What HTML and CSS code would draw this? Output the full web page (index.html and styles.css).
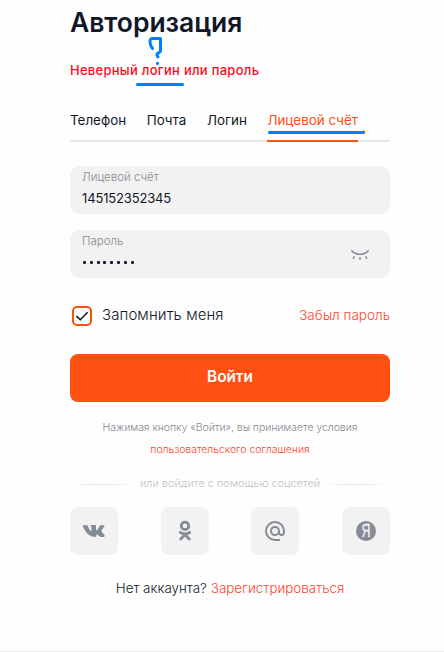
FILE: index.html
```html
<!DOCTYPE html>
<html lang="ru">
<head>
<meta charset="utf-8">
<title>Авторизация</title>
<link rel="stylesheet" href="styles.css">
</head>
<body>
<main class="login">
  <h1 class="title"><span>Авторизация</span></h1>
  <p class="error">Неверный логин или пароль</p>
  <nav class="tabs">
    <a class="tab">Телефон</a>
    <a class="tab">Почта</a>
    <a class="tab">Логин</a>
    <a class="tab tab-active">Лицевой счёт</a>
  </nav>
  <div class="field">
    <div class="field-body">
      <span class="label">Лицевой счёт</span>
      <span class="value">145152352345</span>
    </div>
  </div>
  <div class="field">
    <div class="field-body">
      <span class="label">Пароль</span>
      <span class="dots"><i></i><i></i><i></i><i></i><i></i><i></i><i></i><i></i></span>
    </div>
    <svg class="eye" viewBox="0 0 20 14" fill="none" stroke="#858993" stroke-width="1.5">
      <path d="M1.400 2.200C5.600 7.700 14.400 7.700 18.600 2.200M4.500 8.300 3 10.800M10 9v3M15.500 8.300l1.500 2.500"/>
    </svg>
  </div>
  <div class="options">
    <span class="checkbox"><svg viewBox="0 0 16 16" fill="none" stroke="#101828" stroke-width="1.6"><path d="M2.4 8.2 6.3 11.7 13.6 4.3"/></svg></span>
    <span class="remember">Запомнить меня</span>
    <a class="forgot">Забыл пароль</a>
  </div>
  <button class="submit">Войти</button>
  <p class="terms"><span>Нажимая кнопку «Войти», вы принимаете условия</span><a class="terms-link">пользовательского соглашения</a></p>
  <div class="divider"><span>или войдите с помощью соцсетей</span></div>
  <div class="socials">
    <a class="social"><svg viewBox="0 0 24 24" fill="#858b95"><path d="M1.1 6.2h3.8c.5 0 .7.2.9.8 1 3 2.6 5 3.2 5 .3 0 .4-.2.4-.9V8.3C9.3 7 8.6 6.9 8.6 6.4c0-.2.2-.4.5-.4h4.2c.5 0 .7.3.7.8v4c0 .5.2.7.4.7.5 0 2.2-2.2 3.1-4.3.3-.7.6-1 1.200-1h3.100c.7 0 .9.4.7.9-.4 1.400-3.300 4.500-3.300 4.900 0 .5 3.600 3.700 3.600 5.100 0 .5-.4.8-1 .8h-3c-1.200 0-2.700-2.500-3.900-2.500-.5 0-.6.3-.6.800v.8c0 .7-.3.900-1.300.900-7 .1-10.500-6.400-12.200-10.800-.1-.4 0-.7.3-.7Z"/></svg></a>
    <a class="social"><svg viewBox="0 0 24 24" fill="none" stroke="#858b95" stroke-width="2.800" stroke-linecap="round"><circle cx="12" cy="6.900" r="3.700"/><path d="M7.300 13.500c2.800 1.700 6.600 1.700 9.400 0M12 15.500l-4.300 4.600M12 15.500l4.300 4.600"/></svg></a>
    <a class="social"><svg viewBox="0 0 24 24" fill="#858b95"><path d="M12 2a10 10 0 0 0 0 20h5v-2h-5c-4.300 0-8-3.700-8-8s3.700-8 8-8 8 3.700 8 8v1.400c0 .8-.7 1.600-1.500 1.600s-1.500-.8-1.500-1.600V12a5 5 0 1 0-1.500 3.500c.7.9 1.800 1.500 3 1.500 2 0 3.500-1.600 3.500-3.600V12A10 10 0 0 0 12 2Zm0 13a3 3 0 1 1 0-6 3 3 0 0 1 0 6Z"/></svg></a>
    <a class="social"><svg viewBox="0 0 24 24"><circle cx="12" cy="12" r="10" fill="#858b95"/><text class="ya" x="12" y="18" text-anchor="middle" textLength="9" lengthAdjust="spacingAndGlyphs">Я</text></svg></a>
  </div>
  <p class="signup"><span class="ask">Нет аккаунта?</span> <a class="register">Зарегистрироваться</a></p>
</main>
<div class="bottom-line"></div>
<svg class="marks" viewBox="0 0 444 652" fill="none" stroke="#0080ff" stroke-width="3" stroke-linecap="round" stroke-linejoin="round">
  <path d="M152.500 48.500C149.500 45 149 38.500 152 38.500h8.500v12.500c0 2-3.500 1.500-3.500 3.500 0 1.500.5 1.500 1 2.500M157.500 63.300v.1M137.500 84.500h45"/>
  <path d="M269.500 132.500H363.500v-.5"/>
</svg>
</body>
</html>
```
FILE: styles.css
```css
* { box-sizing: border-box; }
body { margin: 0; height: 652px; overflow: hidden; position: relative; background: #fefefe; color: #101828; font-family: Inter, "Noto Sans", sans-serif; display: flex; flex-direction: column; }
p, h1 { margin: 0; white-space: nowrap; }
.login { width: 320px; margin-left: 70px; flex: 1; display: flex; flex-direction: column; }
.title { height: 46px; line-height: 45px; font-size: 26.5px; font-weight: 600; letter-spacing: -0.05px; }
.error { margin-top: 13px; line-height: 22px; font-size: 13px; font-weight: 500; letter-spacing: 0.27px; color: #ff0a1c; }
.tabs { margin-top: 27px; height: 34px; display: flex; gap: 20.600px; border-bottom: 2px solid #e6e6e6; font-size: 13.4px; line-height: 25px; white-space: nowrap; }
.tab { height: 34px; }
.tab-active { color: #ff5014; border-bottom: 2px solid #ff5014; }
.field { height: 48px; margin-top: 24px; padding: 0 20px 0 12px; border-radius: 9px; background: #f2f2f2; display: flex; align-items: center; justify-content: space-between; }
.field + .field { margin-top: 16px; }
.field-body { height: 48px; display: flex; flex-direction: column; align-items: flex-start; padding-top: 3px; }
.label { font-size: 11.5px; line-height: 17px; font-weight: 300; color: #858990; }
.value { margin-top: 3px; font-size: 13px; line-height: 18px; letter-spacing: -0.15px; }
.dots { margin-top: 11px; padding-left: 1px; display: flex; gap: 3.800px; }
.dots i { width: 3px; height: 3px; border-radius: 1px; background: #101828; }
.eye { width: 20px; height: 14px; margin-top: 2px; }
.options { height: 24px; margin-top: 26px; display: flex; align-items: center; white-space: nowrap; }
.checkbox { width: 20px; height: 20px; margin: 0 10px 0 2px; border: 2px solid #ff5014; border-radius: 5px; flex: none; display: flex; }
.checkbox svg { width: 16px; height: 16px; }
.remember { font-size: 15px; line-height: 24px; font-weight: 300; letter-spacing: 0.1px; padding-bottom: 2px; }
.forgot { margin-left: auto; padding-bottom: 2px; font-size: 13.500px; font-weight: 300; color: #ff4530; }
.submit { height: 48px; margin-top: 26px; padding: 0 0 3px; border: 0; border-radius: 8px; background: #ff5014; color: #fff; font: 600 15.300px/24px Inter, sans-serif; }
.terms { margin-top: 15px; display: flex; flex-direction: column; align-items: center; font-size: 10.500px; letter-spacing: -0.06px; line-height: 22px; font-weight: 300; color: #858990; }
.terms-link { color: #ff4530; }
.divider { margin-top: 14px; height: 16px; display: flex; align-items: center; justify-content: center; gap: 4px; font-size: 10.900px; font-weight: 300; color: #bfc2c6; white-space: nowrap; }
.divider::before, .divider::after { content: ""; flex: 1; height: 1px; margin: 2px 0 0; background: linear-gradient(90deg, transparent, #dedede, transparent); }
.socials { margin-top: 16px; display: flex; justify-content: space-between; }
.social { width: 48px; height: 48px; border-radius: 8px; background: #f2f2f2; display: flex; align-items: center; justify-content: center; }
.social svg { width: 24px; height: 24px; }
.ya { font: 400 18px "Liberation Sans", sans-serif; fill: #f2f2f2; stroke: #f2f2f2; stroke-width: 0.4px; }
.signup { margin-top: 21px; line-height: 24px; font-size: 13.400px; font-weight: 300; display: flex; justify-content: center; gap: 4px; }
.register { color: #ff4530; }
.bottom-line { height: 1px; background: #f0f0f0; }
.marks { position: absolute; left: 0; top: 0; width: 444px; height: 652px; pointer-events: none; }
```
